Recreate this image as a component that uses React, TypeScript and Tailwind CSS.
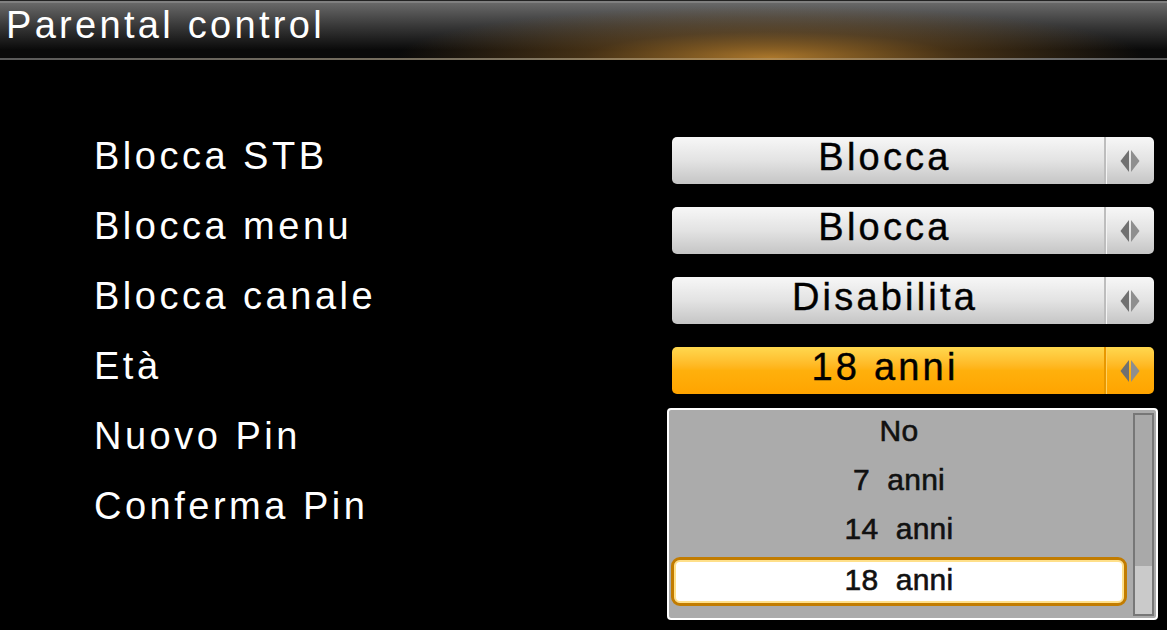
import React from "react";

function Arrows() {
  return (
    <svg width="20" height="24" viewBox="0 0 20 24" className="w-[20px] h-[24px] shrink-0 block">
      <polygon points="9,1 0.5,12 9,23" fill="#707070" />
      <polygon points="11,1 19.5,12 11,23" fill="#8e8e8e" />
    </svg>
  );
}

function ValueBox({ value, active }: { value: string; active?: boolean }) {
  const bg = active
    ? "bg-gradient-to-b from-[#ffd84e] via-[#ffb00c] to-[#ffa400]"
    : "bg-gradient-to-b from-[#f7f7f7] via-[#e3e3e3] to-[#c5c5c5]";
  const divider = active
    ? "border-l-2 border-[#e89800] shadow-[inset_1px_0_0_#ffd060]"
    : "border-l-2 border-[#bdbdbd] shadow-[inset_1px_0_0_#f4f4f4]";
  return (
    <div className={`w-[482px] h-[47px] rounded-[5px] flex ${bg}`}>
      <div className="flex-1 flex items-center justify-center pb-[8px] pr-[6px]">
        <span className="text-[38px] leading-[38px] tracking-[3.2px] text-black [-webkit-text-stroke:0.4px_#000]">{value}</span>
      </div>
      <div className={`w-[50px] flex items-center justify-center ${divider}`}>
        <Arrows />
      </div>
    </div>
  );
}

const rows: { label: string; value?: string; active?: boolean }[] = [
  { label: "Blocca STB", value: "Blocca" },
  { label: "Blocca menu", value: "Blocca" },
  { label: "Blocca canale", value: "Disabilita" },
  { label: "Età", value: "18 anni", active: true },
  { label: "Nuovo Pin" },
  { label: "Conferma Pin" },
];

const options = ["No", "7  anni", "14  anni", "18  anni"];

export default function App() {
  return (
    <div className="w-[1167px] h-[630px] bg-black relative overflow-hidden font-['Liberation_Sans',Arial,sans-serif]">
      <header className="h-[60px] flex flex-col">
        <div className="h-[1px] bg-[#222]" />
        <div className="h-[2px] bg-[#808080]" />
        <div className="h-[55px] pl-[6px] pt-[3px] bg-[radial-gradient(ellipse_32%_95%_at_66%_100%,rgba(180,125,45,0.95),rgba(140,95,35,0.45)_50%,rgba(0,0,0,0)_100%),linear-gradient(to_bottom,#686868,#3a3a3a_40%,#0a0a0a_85%)]">
          <span className="text-[38px] leading-[38px] tracking-[3.3px] text-white">Parental control</span>
        </div>
        <div className="h-[2px] bg-[linear-gradient(to_right,#5a5a5a,#807560_45%,#b08a50_66%,#6a6a6a_90%,#5a5a5a)]" />
      </header>

      <main className="pt-[77px] flex flex-col gap-[23px]">
        {rows.map((r) => (
          <div key={r.label} className="h-[47px] flex items-center">
            <div className="w-[672px] pl-[94px] h-full flex items-center pb-[9px]">
              <span className="text-[38px] leading-[38px] tracking-[3.5px] text-white">{r.label}</span>
            </div>
            {r.value && <ValueBox value={r.value} active={r.active} />}
          </div>
        ))}
      </main>

      <div className="absolute left-[667px] top-[408px] w-[491px] h-[212px] border-2 border-white rounded-[4px] bg-[#ababab] flex">
        <div className="flex-1 flex flex-col pl-[2px] pr-[6px]">
          {options.map((o, i) => {
            const sel = i === options.length - 1;
            return (
              <div
                key={o}
                className={`h-[49px] flex items-center justify-center ${
                  sel
                    ? "bg-white rounded-[9px] border-[3px] border-[#c27c00] shadow-[inset_0_0_0_2px_#ffe08a] pb-[4px]"
                    : "pb-[7px]"
                }`}
              >
                <span className="text-[30px] leading-[30px] whitespace-pre text-[#111] tracking-[0.3px] [-webkit-text-stroke:0.6px_#111]">{o}</span>
              </div>
            );
          })}
        </div>
        <div className="w-[21px] mt-[3px] mb-[2px] mr-[2px] border-2 border-[#777] bg-[#a9a9a9] flex flex-col justify-end">
          <div className="h-[48px] bg-[#cacaca]" />
        </div>
      </div>
    </div>
  );
}
